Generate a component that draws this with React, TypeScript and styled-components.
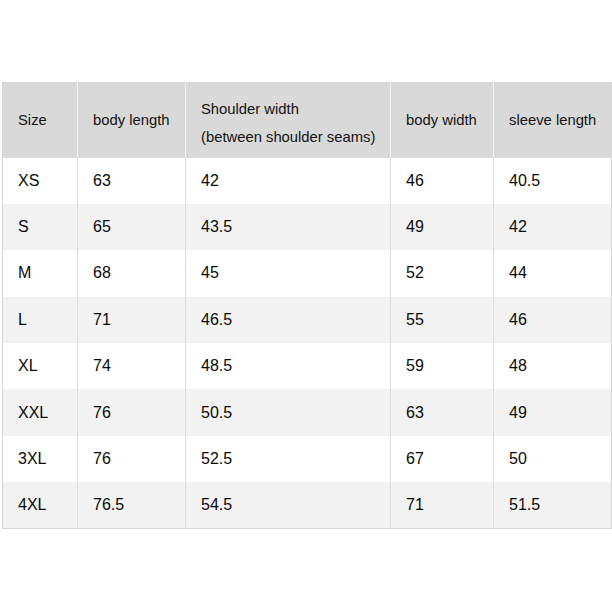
import React from "react";
import styled, { createGlobalStyle } from "styled-components";

const Global = createGlobalStyle`
  html, body { margin: 0; padding: 0; background: #ffffff; }
  body { font-family: "Liberation Sans", Arial, sans-serif; }
`;

const Page = styled.div`
  width: 612px;
  height: 612px;
  padding: 82px 0 0 2px;
  box-sizing: border-box;
  background: #fff;
`;

const Table = styled.table`
  border-collapse: collapse;
  table-layout: fixed;
  width: 609px;
  border: 1px solid #d6d6d6;
  font-family: "Liberation Sans", Arial, sans-serif;
  font-size: 15px;
  color: #111;
`;

const HeadRow = styled.tr`
  height: 75px;
  background: #d9d9d9;
`;

const HeadCell = styled.th<{ $shift?: boolean }>`
  text-align: left;
  font-weight: normal;
  padding: ${(p) => (p.$shift ? "5px" : "0")} 0 0 15px;
  border-left: 1px solid #f4f4f4;
  line-height: 28px;
  font-size: 14.8px;
  color: #141414;
  &:first-child { border-left: none; }
`;

const Row = styled.tr<{ $alt: boolean }>`
  height: 46.4px;
  background: ${(p) => (p.$alt ? "#f2f2f2" : "#ffffff")};
`;

const Cell = styled.td`
  padding: 0 0 0 15px;
  border-left: 1px solid #dcdcdc;
  font-size: 16px;
  color: #0a0a0a;
  &:first-child { border-left: none; }
`;

const widths = [75, 108, 205, 103, 118];

const rows = [
  ["XS", "63", "42", "46", "40.5"],
  ["S", "65", "43.5", "49", "42"],
  ["M", "68", "45", "52", "44"],
  ["L", "71", "46.5", "55", "46"],
  ["XL", "74", "48.5", "59", "48"],
  ["XXL", "76", "50.5", "63", "49"],
  ["3XL", "76", "52.5", "67", "50"],
  ["4XL", "76.5", "54.5", "71", "51.5"],
];

export default function App() {
  return (
    <>
      <Global />
      <Page>
        <Table>
          <colgroup>
            {widths.map((w, i) => (
              <col key={i} style={{ width: w }} />
            ))}
          </colgroup>
          <thead>
            <HeadRow>
              <HeadCell>Size</HeadCell>
              <HeadCell>body length</HeadCell>
              <HeadCell $shift>
                Shoulder width
                <br />
                (between shoulder seams)
              </HeadCell>
              <HeadCell>body width</HeadCell>
              <HeadCell>sleeve length</HeadCell>
            </HeadRow>
          </thead>
          <tbody>
            {rows.map((r, i) => (
              <Row key={r[0]} $alt={i % 2 === 1}>
                {r.map((c, j) => (
                  <Cell key={j}>{c}</Cell>
                ))}
              </Row>
            ))}
          </tbody>
        </Table>
      </Page>
    </>
  );
}
